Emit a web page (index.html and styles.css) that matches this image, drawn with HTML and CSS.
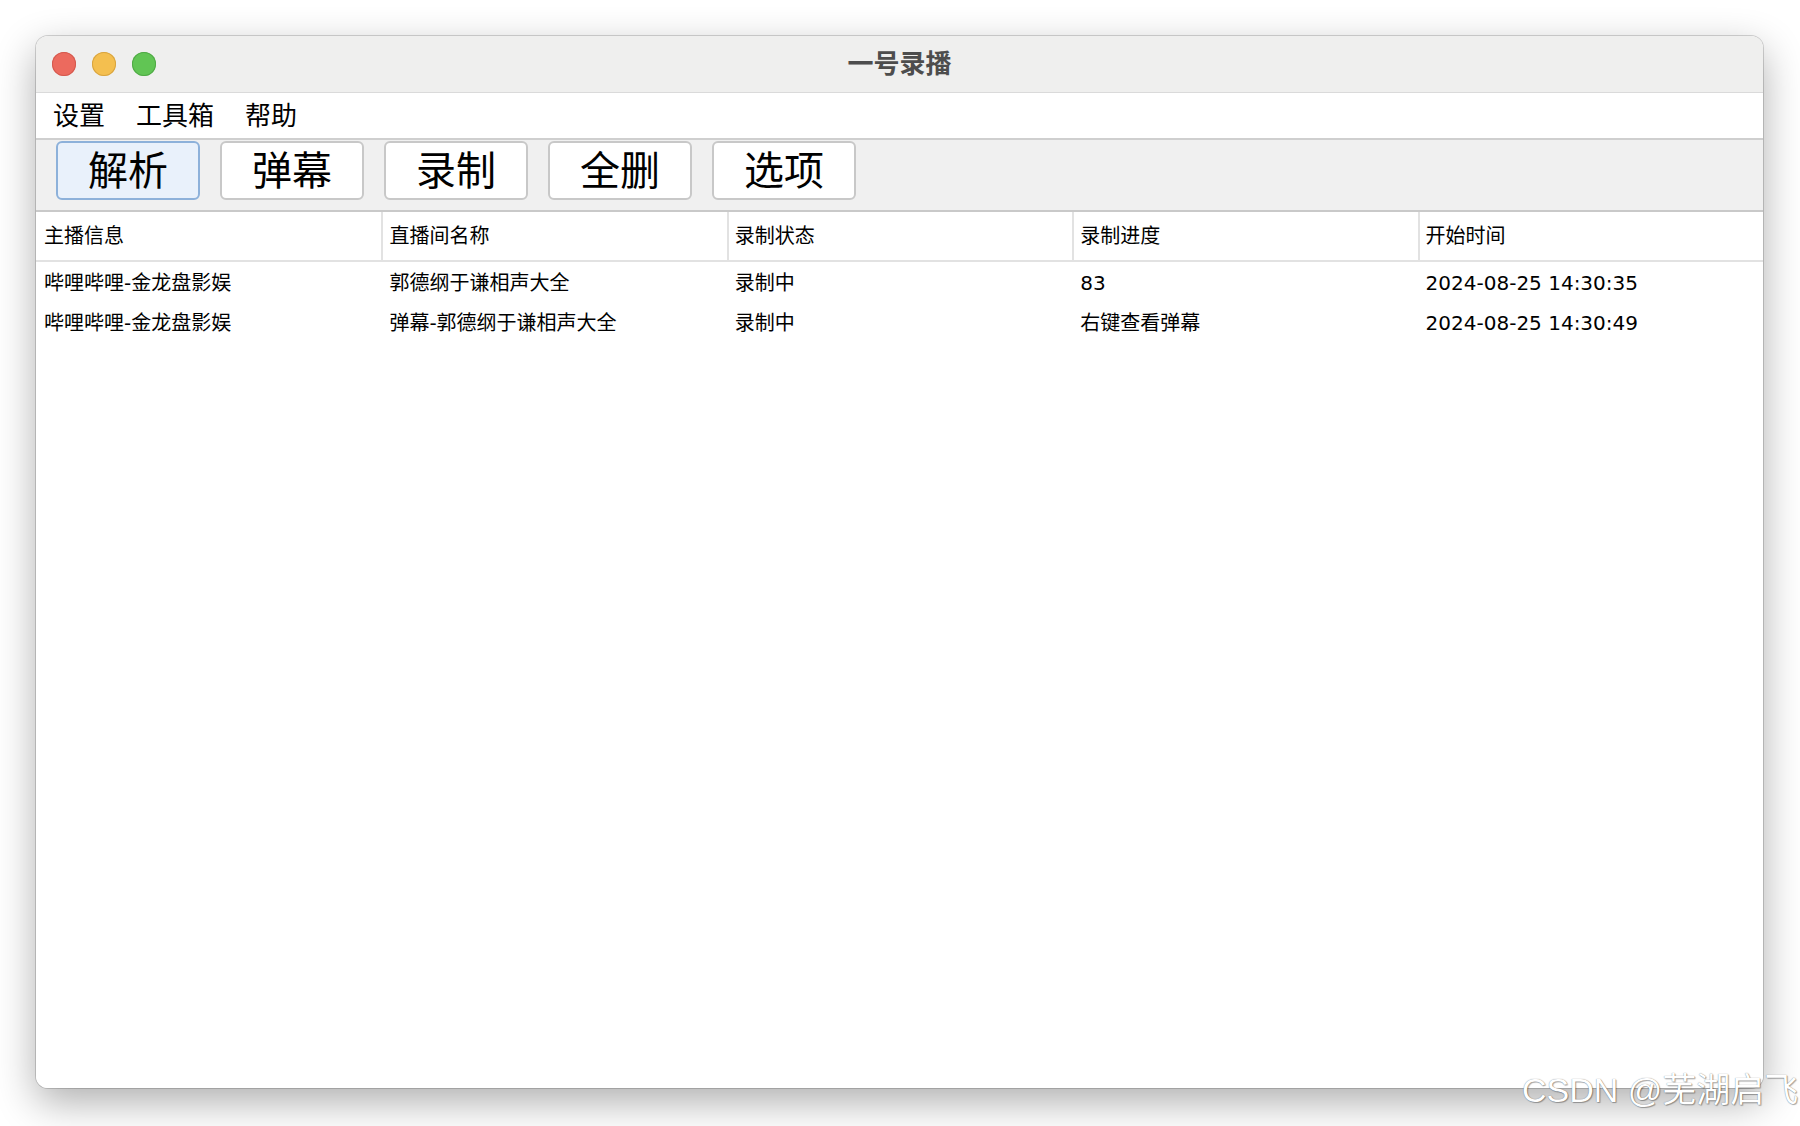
FILE: index.html
```html
<!DOCTYPE html>
<html lang="zh-CN">
<head>
    <meta charset="UTF-8">
    <title>一号录播</title>
    <link rel="stylesheet" href="styles.css">
</head>
<body>

<div class="desk">
    <div class="window">
        <!--标题栏-->
        <div class="titlebar">
            <div class="lights">
                <span class="light light--close"></span>
                <span class="light light--min"></span>
                <span class="light light--max"></span>
            </div>
            <div class="titlebar__title">一号录播</div>
            <div></div>
        </div>

        <!--菜单-->
        <nav class="menubar">
            <span class="menubar__item">设置</span>
            <span class="menubar__item">工具箱</span>
            <span class="menubar__item">帮助</span>
        </nav>

        <!--按钮-->
        <div class="toolbar">
            <button class="btn btn--active">解析</button>
            <button class="btn">弹幕</button>
            <button class="btn">录制</button>
            <button class="btn">全删</button>
            <button class="btn">选项</button>
        </div>

        <!--列表-->
        <div class="table">
            <div class="table__head">
                <div class="table__cell">主播信息</div>
                <div class="table__cell">直播间名称</div>
                <div class="table__cell">录制状态</div>
                <div class="table__cell">录制进度</div>
                <div class="table__cell">开始时间</div>
            </div>
            <div class="table__row">
                <div class="table__cell">哔哩哔哩-金龙盘影娱</div>
                <div class="table__cell">郭德纲于谦相声大全</div>
                <div class="table__cell">录制中</div>
                <div class="table__cell">83</div>
                <div class="table__cell">2024-08-25 14:30:35</div>
            </div>
            <div class="table__row">
                <div class="table__cell">哔哩哔哩-金龙盘影娱</div>
                <div class="table__cell">弹幕-郭德纲于谦相声大全</div>
                <div class="table__cell">录制中</div>
                <div class="table__cell">右键查看弹幕</div>
                <div class="table__cell">2024-08-25 14:30:49</div>
            </div>
        </div>
    </div>

    <div class="watermark">CSDN @芜湖启飞</div>
</div>

</body>
</html>
```

FILE: styles.css
```css
* {
    border: 0;
    box-sizing: border-box;
    margin: 0;
    padding: 0;
}

:root {
    --font: "DejaVu Sans", "Noto Sans CJK SC", sans-serif;
    --cjk: "Noto Sans CJK SC", sans-serif;
    --line: #e2e2e2;
}

body {
    background-color: #fff;
    color: #000;
    font: 20px/1.2 var(--font);
    height: 1126px;
    overflow: hidden;
}

.desk {
    position: relative;
    height: 100%;
    padding: 36px 0 0 36px;
}

.window {
    display: flex;
    flex-direction: column;
    width: 1727px;
    height: 1052px;
    background-color: #fff;
    border-radius: 12px;
    overflow: hidden;
    box-shadow: 0 0 0 1px rgba(0, 0, 0, 0.16),
                0 14px 40px rgba(0, 0, 0, 0.32);
}

/* 标题栏 */
.titlebar {
    display: grid;
    grid-template-columns: 1fr auto 1fr;
    align-items: center;
    height: 57px;
    padding: 0 16px;
    background-color: #efefee;
    border-bottom: 1px solid #dadada;
}

.lights {
    display: flex;
    gap: 16px;
}

.light {
    display: block;
    width: 24px;
    height: 24px;
    border-radius: 50%;
}

.light--close {
    background-color: #ec6a5e;
    box-shadow: 0 0 0 1px #d45a4f inset;
}

.light--min {
    background-color: #f4bf4f;
    box-shadow: 0 0 0 1px #d8a440 inset;
}

.light--max {
    background-color: #61c554;
    box-shadow: 0 0 0 1px #50a946 inset;
}

.titlebar__title {
    color: #4d4d4d;
    font: bold 26px/1 var(--cjk);
    padding-bottom: 4px;
}

/* 菜单 */
.menubar {
    display: flex;
    align-items: center;
    gap: 31px;
    height: 47px;
    padding-left: 17px;
    background-color: #fff;
    border-bottom: 2px solid #cfcfcf;
}

.menubar__item {
    font: 26px/1 var(--cjk);
    padding-bottom: 4px;
}

/* 按钮 */
.toolbar {
    display: flex;
    align-items: flex-start;
    gap: 20px;
    height: 72px;
    padding: 1px 0 0 20px;
    background-color: #f0f0f0;
    border-bottom: 2px solid #c9c9c9;
}

.btn {
    width: 144px;
    height: 59px;
    padding-bottom: 5px;
    background-color: #fff;
    border: 2px solid #c8c8c8;
    border-radius: 6px;
    color: #000;
    font: 40px/1 var(--cjk);
    -webkit-appearance: none;
    appearance: none;
}

.btn--active {
    background-color: #e9f1fb;
    border-color: #8db1da;
}

/* 列表 */
.table {
    flex: 1;
    background-color: #fff;
}

.table__head,
.table__row {
    display: grid;
    grid-template-columns: repeat(5, 1fr);
}

.table__head {
    height: 50px;
    border-bottom: 2px solid var(--line);
}

.table__row {
    height: 40px;
}

.table__cell {
    display: flex;
    align-items: center;
    padding-left: 8px;
    white-space: nowrap;
}

.table__head .table__cell + .table__cell {
    border-left: 2px solid var(--line);
    padding-left: 6px;
}

.table__row .table__cell {
    padding-top: 1px;
}

/* 水印 */
.watermark {
    position: absolute;
    left: 1522px;
    top: 1073px;
    color: #fff;
    font: 34px/1 "Liberation Sans", "Noto Sans CJK SC", sans-serif;
    text-shadow: 0 0 1px rgba(0, 0, 0, 0.55),
                 1px 1px 1px rgba(0, 0, 0, 0.3);
    white-space: nowrap;
}
```
